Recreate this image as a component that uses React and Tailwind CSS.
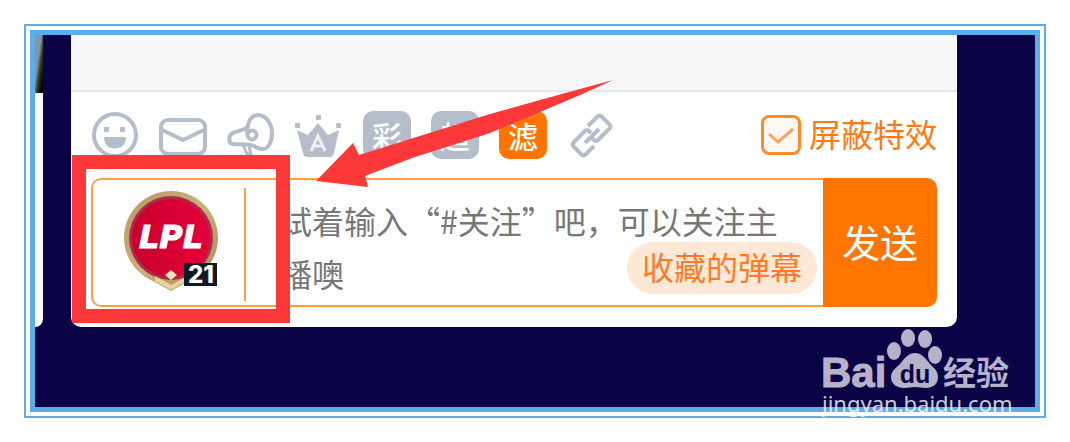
const tools = [
  { label: '表情', Icon: SmileIcon },
  { label: '私信', Icon: MailIcon },
  { label: '喇叭', Icon: HornIcon },
  { label: '贵族', Icon: CrownIcon },
];

const badges = [
  { text: '彩', active: false },
  { text: '超', active: false },
  { text: '滤', active: true },
];

function SmileIcon() {
  return (
    <svg className="h-12 w-12" viewBox="0 0 48 48" fill="none">
      <circle cx="24" cy="24" r="21" stroke="currentColor" strokeWidth="4" />
      <rect x="13" y="16" width="5" height="5" rx="1" fill="currentColor" />
      <rect x="29" y="16" width="5" height="5" rx="1" fill="currentColor" />
      <path d="M13 26h22c0 7-4 11.500-11 11.500S13 33 13 26z" fill="currentColor" />
    </svg>
  );
}

function MailIcon() {
  return (
    <svg className="h-12 w-12" viewBox="0 0 48 48" fill="none" stroke="currentColor" strokeWidth="4">
      <rect x="2" y="9" width="44" height="34" rx="7" />
      <path d="M3 19l21 10 21-10" strokeLinejoin="round" />
    </svg>
  );
}

function HornIcon() {
  return (
    <svg className="h-12 w-12" viewBox="0 0 48 48" fill="none" stroke="currentColor" strokeWidth="4">
      <path d="M20 22C20 10 25 4 31 4c8 0 14 9 14 18 0 9-4 16-9 16-4 0-7-1-10-4" />
      <path d="M22 15C17 19 12 20 6 22c-5 2-5 10 0 11 7 1 14-1 20 2" />
      <circle cx="25" cy="24" r="4.500" />
      <path d="M16 34l4 9h4l-2-7" strokeWidth="3" strokeLinejoin="round" />
    </svg>
  );
}

function CrownIcon() {
  return (
    <svg className="h-12 w-12" viewBox="0 0 48 48" fill="currentColor">
      <rect x="21" y="4" width="5" height="5" rx="1" />
      <rect x="0" y="12" width="5" height="5" rx="1" />
      <rect x="41" y="12" width="5" height="5" rx="1" />
      <path d="M2 19l11 5 10-12 10 12 11-5-5 23q-1 4-4 4H12q-3 0-4-4z" />
      <path d="M16 40l7-15 7 15M19 35h8" fill="none" stroke="#eceff4" strokeWidth="3" />
    </svg>
  );
}

function LinkIcon() {
  return (
    <svg className="h-12 w-12" viewBox="0 0 48 48" fill="none" stroke="currentColor" strokeWidth="4" strokeLinejoin="round">
      <path d="M21 15l9.500-9.500q2-2 4 0l8 8q2 2 0 4L31 29q-2 2-4 0l-2-2" />
      <path d="M27 35l-8.500 8.500q-2 2-4 0l-8-8q-2-2 0-4L18 20q2-2 4 0l2 2" />
      <path d="M18 32l14-14" />
    </svg>
  );
}

function FanBadge() {
  return (
    <svg className="h-[100px] w-24" viewBox="0 0 96 100" role="img" aria-label="LPL 21">
      <defs>
        <linearGradient id="gold" x1="0" y1="0" x2="1" y2="1">
          <stop offset="0" stopColor="#b99a62" />
          <stop offset="0.5" stopColor="#c8b07c" />
          <stop offset="1" stopColor="#a88650" />
        </linearGradient>
        <linearGradient id="crimson" x1="0" x2="1">
          <stop offset="0" stopColor="#c8002b" />
          <stop offset="1" stopColor="#e4003c" />
        </linearGradient>
      </defs>
      <path d="M48 0C22 0 1 21 1 47c0 20 13 37 31 44l16 9 16-9c18-7 31-24 31-44C95 21 74 0 48 0z" fill="url(#gold)" />
      <circle cx="48" cy="47" r="42" fill="#ad2a4c" />
      <circle cx="48" cy="47" r="39" fill="url(#crimson)" />
      <path d="M32 85l16 9 16-9v5l-16 9-16-9z" fill="#e5d3a0" />
      <path d="M48 79l6 5-6 5-6-5z" fill="#f1e4bd" />
      <text
        x="48"
        y="57"
        textAnchor="middle"
        fontFamily="DejaVu Sans, sans-serif"
        fontWeight="700"
        fontStyle="italic"
        fontSize="32"
        stroke="#fff"
        strokeWidth="1"
        fill="#fff"
      >
        LPL
      </text>
      <rect x="61" y="72" width="33" height="23" fill="#0c1b26" />
      <text x="78" y="92" textAnchor="middle" fontFamily="Inter, sans-serif" fontWeight="800" fontSize="24" fill="#fff">
        21
      </text>
    </svg>
  );
}

function Arrow() {
  return (
    <svg className="pointer-events-none absolute left-[245px] top-[45px]" width="297" height="108" viewBox="0 0 297 108" aria-hidden="true">
      <path d="M0 101L37 63l6 12L174 34 224 20 264 9 297 0 264 15 224 32 174 53 96 78 49 96l3 11z" fill="#fc3838" />
    </svg>
  );
}

function Watermark() {
  return (
    <svg className="absolute -bottom-[10px] right-[21px]" width="192" height="90" viewBox="0 0 192 90" role="img" aria-label="Baidu 经验">
      <g fill="#b6b2ca">
        <text x="-1" y="60" fontFamily="Liberation Sans, sans-serif" fontWeight="700" fontSize="42" stroke="#b6b2ca" strokeWidth="1">
          Bai
        </text>
        <ellipse cx="72" cy="24" rx="7" ry="9" />
        <ellipse cx="86" cy="11" rx="7" ry="9" />
        <ellipse cx="103" cy="12" rx="7" ry="9" />
        <ellipse cx="113" cy="28" rx="7" ry="9" />
        <path d="M93 26c7 0 11 6 15 11 4 4 8 7 8 13 0 7-5 11-12 11-4 0-7-1-11-1s-7 1-11 1c-7 0-13-4-13-11 0-6 5-9 9-13 4-5 8-11 15-11z" />
        <text x="121" y="58" fontFamily="Noto Sans CJK SC, sans-serif" fontWeight="700" fontSize="33">
          经验
        </text>
      </g>
      <text x="93" y="56" textAnchor="middle" fontFamily="Liberation Sans, sans-serif" fontWeight="700" fontSize="25" fill="#0a0346">
        du
      </text>
      <text x="0" y="85" fontFamily="Noto Sans, sans-serif" fontSize="22" fill="#fff" fillOpacity="0.8">
        jingyan.baidu.com
      </text>
    </svg>
  );
}

function Toolbar() {
  return (
    <div className="flex h-[86px] items-center gap-5 px-5 text-[#b5bdcb]">
      {tools.map(({ label, Icon }) => (
        <button key={label} type="button" aria-label={label}>
          <Icon />
        </button>
      ))}
      {badges.map(({ text, active }) => (
        <button
          key={text}
          type="button"
          className={`h-12 w-12 rounded-[10px] text-[30px] leading-[46px] font-medium text-white ${
            active ? 'bg-[#ff7500]' : 'bg-[#b5bdcb]'
          }`}
        >
          {text}
        </button>
      ))}
      <button type="button" aria-label="链接">
        <LinkIcon />
      </button>
      <label className="ml-auto flex items-center gap-2 text-[32px] leading-10 text-[#ff7a14]">
        <span className="relative h-10 w-10">
          <input
            type="checkbox"
            defaultChecked
            className="peer block h-10 w-10 appearance-none rounded-lg border-[3px] border-[#ff8a2b] bg-[#fff9f4]"
          />
          <svg className="pointer-events-none absolute inset-0 hidden peer-checked:block" viewBox="0 0 40 40" fill="none">
            <path d="M8 19l9 8 15-13" stroke="#ffa45c" strokeWidth="3" />
          </svg>
        </span>
        <span className="-mt-1">屏蔽特效</span>
      </label>
    </div>
  );
}

function MessageForm() {
  return (
    <form className="relative mx-5 flex h-[129px]" onSubmit={(e) => e.preventDefault()}>
      <div className="relative flex flex-1 rounded-l-[10px] border-2 border-r-0 border-[#ffa040]">
        <div className="mt-2 mb-1 flex w-[153px] items-center justify-center border-r-2 border-[#ffa040] pb-2 pl-1">
          <FanBadge />
        </div>
        <textarea
          aria-label="弹幕内容"
          placeholder="试着输入“#关注”吧，可以关注主播噢"
          className="ml-[34px] mr-4 flex-1 resize-none overflow-hidden pt-[14px] text-[32px] leading-[53px] outline-none placeholder:text-[#777]"
        />
        <button
          type="button"
          className="absolute right-[6px] bottom-[11px] h-[52px] rounded-full bg-[#ffe8d6] px-[15px] pb-1 text-[32px] leading-[48px] text-[#ff7a2a]"
        >
          收藏的弹幕
        </button>
      </div>
      <button type="submit" className="w-[114px] rounded-r-[10px] bg-[#ff7500] pb-1 text-[38px] text-white">
        发送
      </button>
      <div className="pointer-events-none absolute -top-[23px] -left-[19px] h-[168px] w-[218px] border-[14px] border-[#fc3838]" />
    </form>
  );
}

export default function App() {
  return (
    <main lang="zh-CN" className="m-6 border-2 border-[#5eace9] bg-white p-1 font-['Noto_Sans_CJK_SC',sans-serif]">
      <div className="relative flex gap-7 border-[5px] border-[#5eace9] bg-[#0a0346] pb-20 pr-[78px]">
        <div className="flex w-2 flex-col overflow-hidden rounded-br-lg bg-white">
          <div className="h-[58px] bg-linear-to-br from-[#8296a8] from-40% via-[#344020] via-60% to-black" />
        </div>
        <section className="relative flex-1 rounded-b-[10px] bg-white pb-5">
          <div className="h-[57px] border-b-2 border-[#e8e8e8] bg-[#f7f7f7]" />
          <Toolbar />
          <MessageForm />
          <Arrow />
        </section>
        <Watermark />
      </div>
    </main>
  );
}
